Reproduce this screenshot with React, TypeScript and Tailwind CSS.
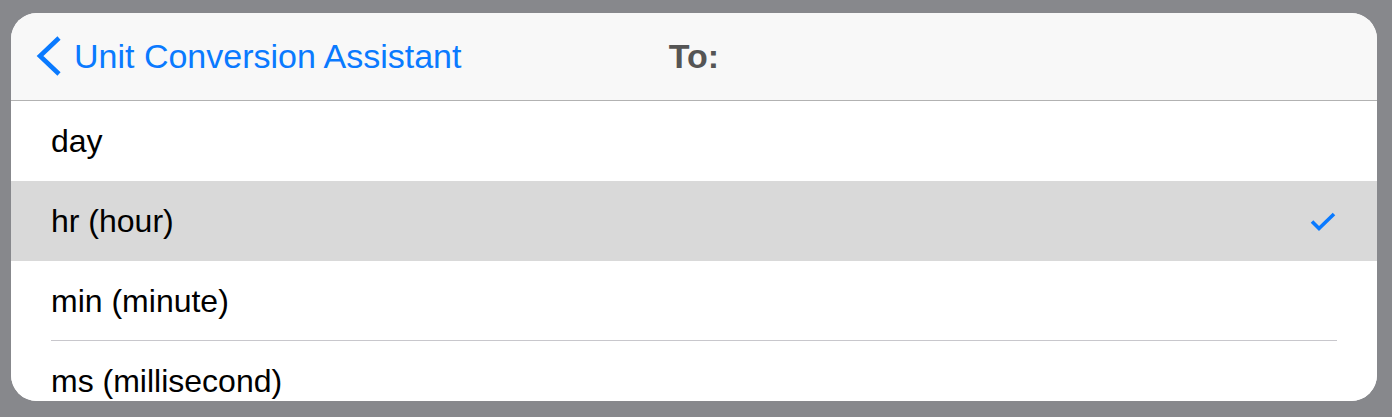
import React from 'react'

interface Unit {
  label: string
  selected?: boolean
}

const units: Unit[] = [
  { label: 'day' },
  { label: 'hr (hour)', selected: true },
  { label: 'min (minute)' },
  { label: 'ms (millisecond)' },
]

function BackChevron() {
  return (
    <svg width="28" height="42" viewBox="0 0 28 42" fill="none" className="shrink-0">
      <path d="M24 3 L5 21 L24 39" stroke="#0a7aff" strokeWidth="4.6" strokeLinejoin="miter" strokeLinecap="butt" />
    </svg>
  )
}

function Check() {
  return (
    <svg width="28" height="22" viewBox="0 0 28 22" fill="none" className="shrink-0">
      <path d="M3 11.5 L10 18.5 L25 4" stroke="#0a7aff" strokeWidth="3.6" strokeLinejoin="miter" />
    </svg>
  )
}

export default function App() {
  return (
    <div className="w-[1392px] h-[417px] bg-[#87888c] pt-[13px] pl-[11px] pr-[15px] pb-[16px] font-['Liberation_Sans',Arial,sans-serif]">
      <div className="h-full bg-white rounded-[26px] overflow-hidden flex flex-col">

        {/* header */}
        <div className="h-[88px] shrink-0 bg-[#f8f8f8] border-b border-[#b2b2b2] grid grid-cols-[1fr_auto_1fr] items-center pb-[2px]">
          <div className="flex items-center gap-[11px] pl-[24px] text-[#0a7aff] text-[34px] leading-none">
            <BackChevron />
            <span>Unit Conversion Assistant</span>
          </div>
          <div className="text-[34px] font-bold text-[#555555] leading-none">To:</div>
          <div />
        </div>

        {/* list */}
        <div className="flex-1 overflow-hidden">
          {units.map((u, i) => {
            const next = units[i + 1]
            const showSep = !u.selected && !(next && next.selected) && i < units.length - 1
            return (
              <div key={u.label} className={u.selected ? 'bg-[#d9d9d9]' : 'bg-white'}>
                <div className="h-[80px] flex items-center justify-between px-[40px]">
                  <span className="text-[32px] text-black leading-none">{u.label}</span>
                  {u.selected && <Check />}
                </div>
                {showSep && i > 0 && <div className="mx-[40px] h-px bg-[#c8c7cc] -mt-px" />}
              </div>
            )
          })}
        </div>

      </div>
    </div>
  )
}
